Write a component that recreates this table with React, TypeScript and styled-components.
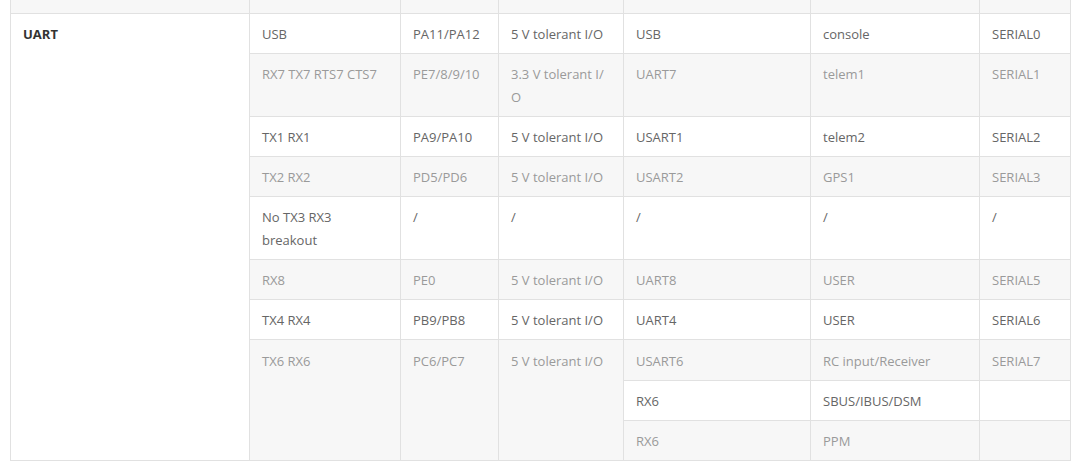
import { createGlobalStyle, styled } from "styled-components"

const GlobalStyle = createGlobalStyle`
  body {
    margin: 0;
    background: #fff;
    font-family: "Open Sans", "Liberation Sans", sans-serif;
  }
`

type Row = { cells: (string | JSX.Element)[]; striped: boolean }

const widths = [239, 151, 98, 125, 187, 169, 91]

const rows: Row[] = [
  { cells: ["USB", "PA11/PA12", "5 V tolerant I/O", "USB", "console", "SERIAL0"], striped: false },
  {
    cells: [
      "RX7 TX7 RTS7 CTS7",
      "PE7/8/9/10",
      <>3.3 V tolerant I/<wbr />O</>,
      "UART7",
      "telem1",
      "SERIAL1",
    ],
    striped: true,
  },
  { cells: ["TX1 RX1", "PA9/PA10", "5 V tolerant I/O", "USART1", "telem2", "SERIAL2"], striped: false },
  { cells: ["TX2 RX2", "PD5/PD6", "5 V tolerant I/O", "USART2", "GPS1", "SERIAL3"], striped: true },
  { cells: [<>No TX3 RX3<br />breakout</>, "/", "/", "/", "/", "/"], striped: false },
  { cells: ["RX8", "PE0", "5 V tolerant I/O", "UART8", "USER", "SERIAL5"], striped: true },
  { cells: ["TX4 RX4", "PB9/PB8", "5 V tolerant I/O", "UART4", "USER", "SERIAL6"], striped: false },
]

const App = () => {
  return (
    <>
      <GlobalStyle />
      <Wrapper>
        <Table>
          <colgroup>
            {widths.map((w, i) => (
              <col key={i} style={{ width: w }} />
            ))}
          </colgroup>
          <thead>
            <HeadRow>
              {widths.map((_, i) => (
                <HeadCell key={i} />
              ))}
            </HeadRow>
          </thead>
          <tbody>
            {rows.map((row, i) => (
              <BodyRow key={i} $striped={row.striped}>
                {i === 0 && <GroupCell rowSpan={10}>UART</GroupCell>}
                {row.cells.map((c, j) => (
                  <Cell key={j}>{c}</Cell>
                ))}
              </BodyRow>
            ))}
            <BodyRow $striped>
              <Cell rowSpan={3}>TX6 RX6</Cell>
              <Cell rowSpan={3}>PC6/PC7</Cell>
              <Cell rowSpan={3}>5 V tolerant I/O</Cell>
              <Cell>USART6</Cell>
              <Cell>RC input/Receiver</Cell>
              <Cell>SERIAL7</Cell>
            </BodyRow>
            <BodyRow $striped={false}>
              <Cell>RX6</Cell>
              <Cell>SBUS/IBUS/DSM</Cell>
              <Cell />
            </BodyRow>
            <BodyRow $striped>
              <Cell>RX6</Cell>
              <Cell>PPM</Cell>
              <Cell />
            </BodyRow>
          </tbody>
        </Table>
      </Wrapper>
    </>
  )
}

const Wrapper = styled.div`
  padding: 0 10px 14px 10px;
`

const Table = styled.table`
  width: 1060px;
  table-layout: fixed;
  border-collapse: collapse;
  font-size: 13px;
  line-height: 22.2px;
`

const HeadRow = styled.tr`
  background: #f7f7f7;
`

const HeadCell = styled.th`
  height: 13px;
  padding: 0;
  border: 1px solid #e1e1e1;
  border-top: none;
`

const BodyRow = styled.tr<{ $striped: boolean }>`
  background: ${({ $striped }) => ($striped ? "#f7f7f7" : "#fff")};
  color: ${({ $striped }) => ($striped ? "#9a9a9a" : "#666")};
`

const Cell = styled.td`
  padding: 9.1px 12px 8px 12px;
  border: 1px solid #e1e1e1;
  vertical-align: top;
  text-align: left;
`

const GroupCell = styled(Cell)`
  background: #fff;
  color: #333;
  font-weight: 700;
`

export default App
